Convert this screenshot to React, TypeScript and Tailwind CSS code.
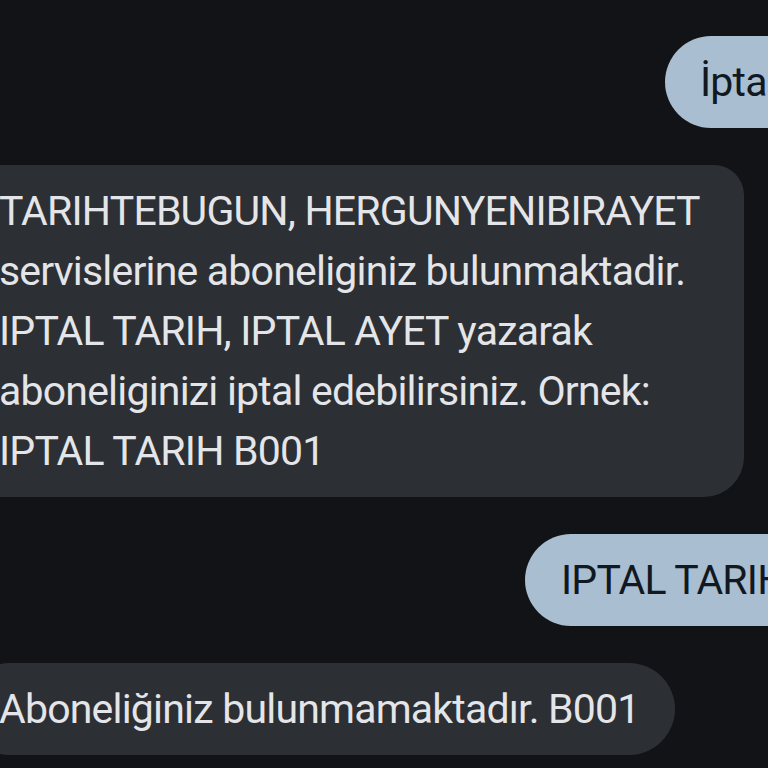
export default function App() {
  return (
    <div
      className="w-[768px] h-[768px] overflow-hidden bg-[#111317] flex flex-col pt-[36px] gap-[37px] text-[41px] leading-[60px] tracking-[-0.8px]"
      style={{ fontFamily: 'Roboto, "Liberation Sans", sans-serif' }}
    >
      {/* sent */}
      <div className="flex ml-[665px]">
        <div className="whitespace-nowrap bg-[#a9bed0] text-[#101821] rounded-l-[46px] pl-[35px] pr-[60px] py-[16px]">
          İptal
        </div>
      </div>

      {/* received */}
      <div className="flex -ml-[36px]">
        <div className="w-[780px] bg-[#2c2f33] text-[#e4e5e8] rounded-[30px] rounded-br-[40px] pl-[35px] py-[16px] whitespace-nowrap">
          TARIHTEBUGUN, HERGUNYENIBIRAYET
          <br />
          servislerine aboneliginiz bulunmaktadir.
          <br />
          IPTAL TARIH, IPTAL AYET yazarak
          <br />
          aboneliginizi iptal edebilirsiniz. Ornek:
          <br />
          IPTAL TARIH B001
        </div>
      </div>

      {/* sent */}
      <div className="flex ml-[525px]">
        <div className="whitespace-nowrap bg-[#a9bed0] text-[#101821] rounded-l-[46px] pl-[36px] pr-[60px] py-[16px]">
          IPTAL TARIH B001
        </div>
      </div>

      {/* received */}
      <div className="flex -ml-[36px]">
        <div className="bg-[#2c2f33] text-[#e4e5e8] rounded-[46px] pl-[35px] pr-[35px] py-[16px] whitespace-nowrap">
          Aboneliğiniz bulunmamaktadır. B001
        </div>
      </div>
    </div>
  );
}
